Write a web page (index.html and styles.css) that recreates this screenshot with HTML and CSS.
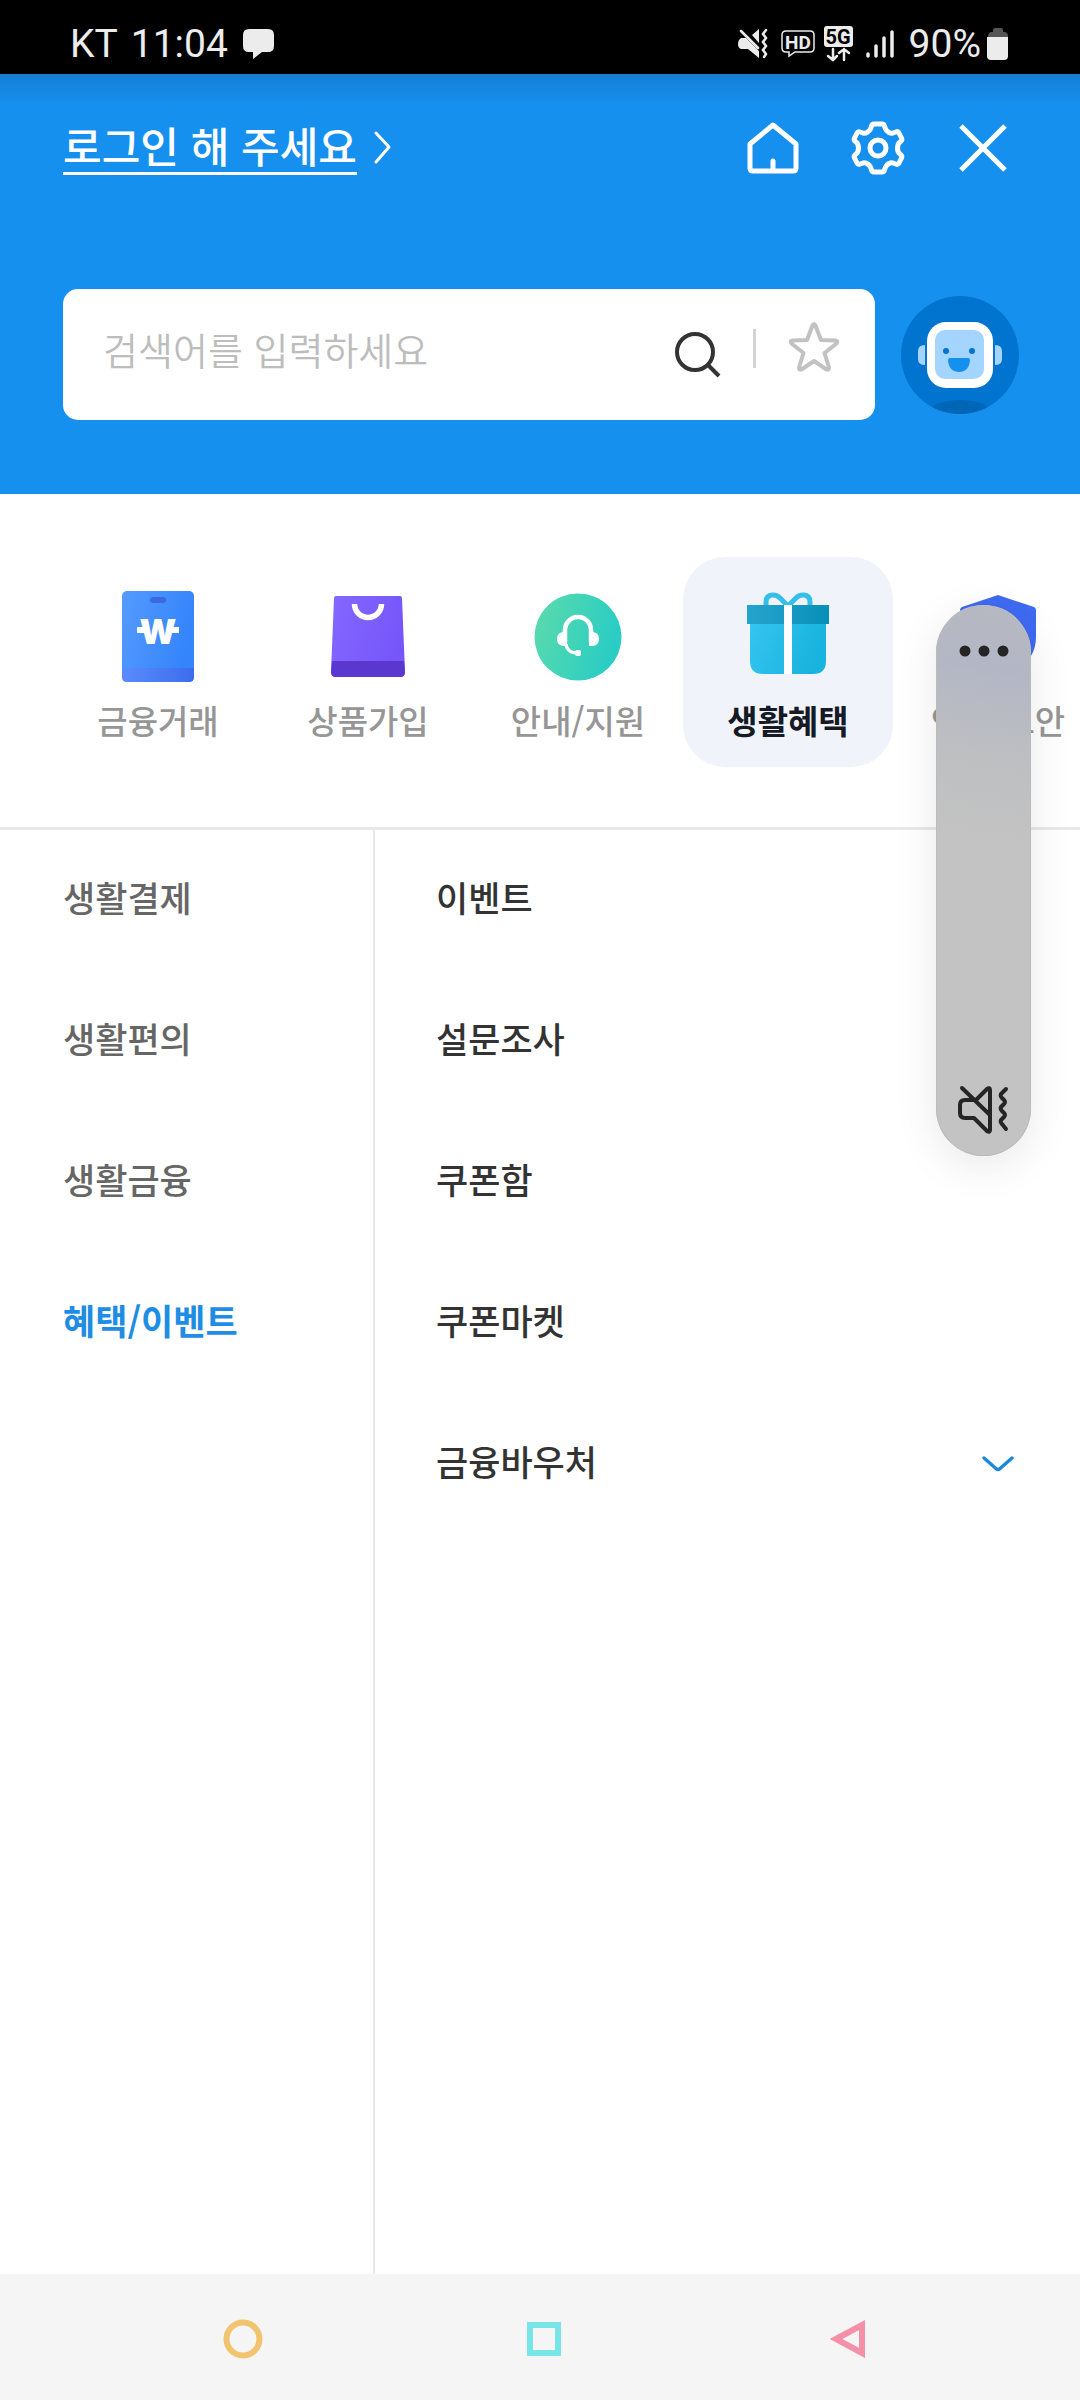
FILE: index.html
```html
<!DOCTYPE html>
<html lang="ko">
<head>
<meta charset="utf-8">
<meta name="viewport" content="width=device-width, initial-scale=1">
<title>전체메뉴</title>
<link rel="stylesheet" href="styles.css">
</head>
<body>
<div class="status">
  <span>KT</span>
  <span>11:04</span>
  <svg class="status-msg" width="32" height="32" viewBox="0 0 32 32" fill="#ececec"><path d="M6 1h19q6 0 6 6v11q0 6-6 6h-6l-9 7v-7H6q-6 0-6-6V7q0-6 6-6z"/></svg>
  <div class="status-right">
    <svg width="32" height="32" viewBox="0 0 32 32" fill="none" stroke="#ececec" stroke-width="2.5" stroke-linecap="round"><path d="M14 7 21 1V15zM3 10h5L21 23v7L10 21H3Q0 20 0 16t3-6z" fill="#ececec" stroke="none"/><path d="M3 3 20 20M28 2l-3 4 3 4-3 4 3 4-3 4 3 4-2 3"/></svg>
    <svg class="status-hd" width="34" height="32" viewBox="0 0 34 32" fill="none" stroke="#ececec" stroke-width="1.5"><path d="M5 3h24q4 0 4 4v13q0 4-4 4H14l-6 4v-4H5q-4 0-4-4V7q0-4 4-4z"/><text class="hd" x="17" y="21" text-anchor="middle">HD</text></svg>
    <svg width="30" height="40" viewBox="0 -2 30 40" fill="none" stroke="#ececec" stroke-width="2.5" stroke-linecap="round"><rect x="1" y="0" width="29" height="21" rx="3" fill="#ececec" stroke="none"/><text class="fiveg" x="15" y="18" text-anchor="middle">5G</text><path d="M10 23v11M5 30l5 4 4-4M21 34V23M16 27l5-4 5 4"/></svg>
    <svg width="30" height="32" viewBox="0 0 30 32" stroke="#ececec" stroke-width="3.5" stroke-linecap="round"><path d="M4 26v2M12 18v10M20 10v18M28 4v24"/></svg>
    <span class="status-level">90%</span>
    <svg class="battery" width="22" height="34" viewBox="0 0 22 34"><path d="M6 3q0-2 2-2h6q2 0 2 2v2h1q4 0 4 5H1q0-5 4-5h1z" fill="#555"/><path d="M0 10h21v19q0 4-4 4H4q-4 0-4-4z" fill="#ececec"/></svg>
  </div>
</div>

<header class="head">
  <div class="head-top">
    <a class="login" href="#"><span class="login-text">로그인 해 주세요</span>
      <svg width="20" height="36" viewBox="0 0 20 36" fill="none" stroke="#fff" stroke-width="3" stroke-linecap="round" stroke-linejoin="round"><path d="M3 4l13 14L3 33"/></svg></a>
    <nav class="head-actions">
      <button type="button" aria-label="홈"><svg width="60" height="60" viewBox="0 0 60 60" fill="none" stroke="#fff" stroke-width="5" stroke-linejoin="round" stroke-linecap="round"><path d="M30 7 53 26V50q0 3-3 3H10q-3 0-3-3V26zM30 43v9"/></svg></button>
      <button type="button" aria-label="설정"><svg width="60" height="60" viewBox="0 0 60 60" fill="none" stroke="#fff" stroke-width="5" stroke-linejoin="round"><circle cx="30" cy="30" r="8"/><path d="M26 6h8q2 0 2.500 2l1 3q1 2 3.500 3.500 2 1 4 .5l3-1q2-1 3 1l2.500 5q1 2-1 3.500-3 2-3 6.500t3 6.500q2 1.500 1 3.500l-2.500 5q-1 2-3 1l-3-1q-2-.5-4 .5-2.500 1.500-3.500 3.500l-1 3q-.5 2-2.500 2h-8q-2 0-2.500-2l-1-3q-1-2-3.500-3.500-2-1-4-.5l-3 1q-2 1-3-1l-2.500-5q-1-2 1-3.500 3-2 3-6.500t-3-6.500q-2-1.500-1-3.500l2.500-5q1-2 3-1l3 1q2 .5 4-.5 2.500-1.500 3.500-3.500l1-3Q24 6 26 6z"/></svg></button>
      <button type="button" aria-label="닫기"><svg width="60" height="60" viewBox="0 0 60 60" fill="none" stroke="#fff" stroke-width="5"><path d="M8 8 52 52M52 8 8 52"/></svg></button>
    </nav>
  </div>
  <div class="head-search">
    <form class="search">
      <input class="search-input" type="text" aria-label="검색어" placeholder="검색어를 입력하세요">
      <button class="search-go" type="button" aria-label="검색"><svg width="48" height="48" viewBox="0 0 48 48" fill="none" stroke="#333" stroke-width="4"><circle cx="21" cy="21" r="18"/><path d="M33 33 45 45"/></svg></button>
      <span class="search-line"></span>
      <button class="search-star" type="button" aria-label="즐겨찾기"><svg width="52" height="52" viewBox="0 0 52 52" fill="none" stroke="#c2c2c2" stroke-width="4" stroke-linejoin="round"><path d="M24.500 4.500q1.500-3 3 0L33 19l14.500.5q3 .5 1 3L36.500 32l4.500 14.500q0 3-2.500 2L26 40 13.500 48.500q-2.500 1-2.500-2L15.500 32 3.500 22.500q-2-2.500 1-3L19 19z"/></svg></button>
    </form>
    <button class="bot" type="button" aria-label="챗봇"><svg width="118" height="118" viewBox="0 0 118 118"><clipPath id="bot-round"><circle cx="59" cy="59" r="59"/></clipPath><circle cx="59" cy="59" r="59" fill="#0074cf"/><ellipse cx="59" cy="113" rx="28" ry="9" fill="#0067b8" clip-path="url(#bot-round)"/><path d="M24 49v20q-7 0-7-6v-8q0-6 7-6zM94 49v20q7 0 7-6v-8q0-6-7-6z" fill="#a3d5ff"/><rect x="26" y="26" width="66" height="66" rx="19" fill="#fff"/><rect x="34" y="34" width="49" height="49" rx="10" fill="#a3d5ff"/><circle cx="45" cy="55" r="3" fill="#0074cf"/><circle cx="71" cy="55" r="3" fill="#0074cf"/><path d="M49 62h18q2 0 2 2-1 12-11 12T47 64q0-2 2-2z" fill="#1690ee"/></svg></button>
  </div>
</header>

<nav class="tabs">
  <a class="tab" href="#"><svg width="100" height="100" viewBox="0 0 100 100"><defs><linearGradient id="g1" x2="1" y2=".3"><stop stop-color="#559bff"/><stop offset="1" stop-color="#3484fb"/></linearGradient><linearGradient id="g1b"><stop stop-color="#5c8bff"/><stop offset="1" stop-color="#3c6dea"/></linearGradient></defs><rect x="14" y="4" width="72" height="91" rx="5" fill="url(#g1)"/><path d="M14 81h72v9q0 5-5 5H19q-5 0-5-5z" fill="url(#g1b)"/><rect x="42" y="10" width="16" height="6" rx="3" fill="#3a6ae0"/><text class="won" x="50" y="57" text-anchor="middle">W</text><path d="M29 40h8v6h-8zM64 40h7v6h-7z" fill="#fff"/></svg><span>금융거래</span></a>
  <a class="tab" href="#"><svg width="100" height="100" viewBox="0 0 100 100"><defs><linearGradient id="g2" x2="1" y2=".3"><stop stop-color="#8468ff"/><stop offset="1" stop-color="#7656fa"/></linearGradient></defs><path d="M18 9h64q2 0 2 2l3 74q0 5-5 5H18q-5 0-5-5l3-74q0-2 2-2z" fill="url(#g2)"/><path d="M14 74h72l1 11q0 5-5 5H18q-5 0-5-5z" fill="#5a38d0"/><path d="M36.500 17a13.500 13.500 0 0 0 27 0" fill="none" stroke="#fff" stroke-width="5.500"/></svg><span>상품가입</span></a>
  <a class="tab" href="#"><svg width="100" height="100" viewBox="0 0 100 100"><defs><linearGradient id="g3" x2="1" y2=".3"><stop stop-color="#5ddbab"/><stop offset="1" stop-color="#2acdc4"/></linearGradient></defs><circle cx="50" cy="50" r="43.500" fill="url(#g3)"/><g fill="none" stroke="#fff"><path d="M37 56V43a13 13 0 0 1 26 0v13" stroke-width="4.500"/><path d="M38 57q1 9 12 9" stroke-width="3"/></g><path d="M39 45v14h-3q-7 0-7-7t7-7zM61 45v14h3q7 0 7-7t-7-7z" fill="#fff"/><rect x="47" y="63" width="6" height="6" rx="2" fill="#fff"/></svg><span>안내/지원</span></a>
  <a class="tab tab-on" href="#"><svg width="100" height="100" viewBox="0 0 100 100"><defs><linearGradient id="g4" x2="1" y2=".3"><stop stop-color="#35c5f0"/><stop offset="1" stop-color="#18b3de"/></linearGradient><linearGradient id="g4b"><stop stop-color="#25a5cd"/><stop offset="1" stop-color="#088fb8"/></linearGradient></defs><path d="M12 36h76v38q0 13-13 13H25q-13 0-13-13z" fill="url(#g4)"/><path d="M28 18V15q0-7 7-7 4 0 7 3l8 8 8-8q3-3 7-3 7 0 7 7v3" fill="none" stroke="#35bfea" stroke-width="5"/><path d="M9 18h82v19H9z" fill="url(#g4b)"/><path d="M46 18h8v69h-8z" fill="#fff"/></svg><span>생활혜택</span></a>
  <a class="tab" href="#"><svg width="100" height="100" viewBox="0 0 100 100"><path d="M50 8 86 20q2 1 2 3v27q0 29-38 42Q12 79 12 50V23q0-2 2-3z" fill="#3f6bf2"/></svg><span>인증/보안</span></a>
</nav>

<main class="content">
  <ul class="groups">
    <li><a href="#">생활결제</a></li>
    <li><a href="#">생활편의</a></li>
    <li><a href="#">생활금융</a></li>
    <li><a class="group-on" href="#">혜택/이벤트</a></li>
  </ul>
  <ul class="items">
    <li><a href="#">이벤트</a></li>
    <li><a href="#">설문조사</a></li>
    <li><a href="#">쿠폰함</a></li>
    <li><a href="#">쿠폰마켓</a></li>
    <li><a href="#">금융바우처<svg class="chevron" width="36" height="20" viewBox="0 0 36 20" fill="none" stroke="#1e88da" stroke-width="3.500" stroke-linecap="round" stroke-linejoin="round"><path d="M4 4l12.500 11q1.500 1 3 0L32 4"/></svg></a></li>
  </ul>
</main>

<nav class="sysnav">
  <button type="button" aria-label="홈 화면"><svg width="42" height="42" viewBox="0 0 42 42" fill="none" stroke="#f2c46f" stroke-width="6"><circle cx="21" cy="21" r="16.500"/></svg></button>
  <button type="button" aria-label="최근 앱"><svg width="42" height="42" viewBox="0 0 42 42" fill="none" stroke="#78e5e8" stroke-width="6"><path d="M6 7h28v28H6z"/></svg></button>
  <button type="button" aria-label="뒤로"><svg width="42" height="42" viewBox="0 0 42 42" fill="none" stroke="#f590a8" stroke-width="6"><path d="M10 21 36 7v28z"/></svg></button>
</nav>

<aside class="volume">
  <button type="button" aria-label="더보기"><svg width="50" height="12" viewBox="0 0 50 12" fill="#252525"><circle cx="6" cy="6" r="5.500"/><circle cx="25" cy="6" r="5.500"/><circle cx="44" cy="6" r="5.500"/></svg></button>
  <button type="button" aria-label="진동"><svg width="54" height="52" viewBox="0 0 54 52" fill="none" stroke="#252525" stroke-width="4" stroke-linecap="round" stroke-linejoin="round"><path d="M5 4 33 31M19 16 30 5q3-2 3 1v40q0 3-3 1L17 34H8q-5 0-5-5v-8q0-5 5-5h10M49 5l-5 5q-1 2 1 4l2 2q2 2 0 4l-3 3q-1 2 1 4l2 2q2 2 0 4l-3 3q-1 2 1 4l4 5"/></svg></button>
</aside>
</body>
</html>
```
FILE: styles.css
```css
* {
  box-sizing: border-box;
}

body {
  margin: 0;
  min-height: 100vh;
  display: flex;
  flex-direction: column;
  position: relative;
  overflow-x: hidden;
  background: #fff;
  font-family: "Noto Sans CJK KR", sans-serif;
  font-weight: 500;
}

a {
  color: inherit;
  text-decoration: none;
}

button {
  padding: 0;
  border: 0;
  background: none;
  display: flex;
  align-items: center;
  justify-content: center;
}

svg {
  display: block;
  flex: none;
  overflow: visible;
}

ul {
  margin: 0;
  padding: 0;
  list-style: none;
}

/* Status bar */
.status {
  height: 74px;
  padding: 14px 71px 0 70px;
  display: flex;
  align-items: center;
  gap: 13px;
  background: #000;
  color: #ececec;
  font: 400 39px/48px Roboto, sans-serif;
}

.status-msg {
  margin-left: 2px;
}

.status-right {
  margin-left: auto;
  display: flex;
  align-items: center;
  gap: 11px;
}

.status-hd {
  margin-right: -3px;
}

.status-level {
  margin-left: 4px;
}

.battery {
  margin-left: -5px;
}

.hd {
  font: 700 19px Roboto, sans-serif;
  fill: #ececec;
  stroke: none;
}

.fiveg {
  font: 700 20px Roboto, sans-serif;
  fill: #000;
  stroke: none;
}

/* Blue header */
.head {
  padding: 42px 61px 74px 63px;
  background: linear-gradient(#147fd6, #1690ee 32px);
}

.head-top {
  display: flex;
  align-items: center;
  justify-content: space-between;
  height: 64px;
  padding-right: 4px;
}

.login {
  display: flex;
  align-items: center;
  gap: 16px;
  padding-bottom: 3px;
  color: #fff;
  font-size: 42px;
  line-height: 54px;
}

.login-text {
  border-bottom: 3px solid #fff;
}

.head-actions {
  display: flex;
  gap: 41px;
}

.head-actions button {
  width: 64px;
  height: 64px;
}

.head-search {
  margin-top: 109px;
  display: flex;
  align-items: center;
  gap: 26px;
}

.search {
  flex: 1;
  height: 131px;
  padding: 0 35px 0 40px;
  display: flex;
  align-items: center;
  border-radius: 15px;
  background: #fff;
}

.search-input {
  flex: 1;
  min-width: 0;
  height: 80px;
  padding: 0 0 12px;
  border: 0;
  outline: 0;
  font: 350 38px/56px "Noto Sans CJK KR", sans-serif;
}

.search-input::placeholder {
  color: #bdbdbd;
  opacity: 1;
}

.search-line {
  width: 3px;
  height: 39px;
  margin: 0 32px 12px 31px;
  background: #d4d4d4;
}

.search-star {
  padding-bottom: 16px;
}

/* Category tabs */
.tabs {
  display: flex;
  padding: 63px 0 60px 53px;
  overflow: hidden;
  border-bottom: 3px solid #e8e8e8;
}

.tab {
  flex: 0 0 210px;
  height: 210px;
  padding-top: 30px;
  display: flex;
  flex-direction: column;
  align-items: center;
  gap: 9px;
  border-radius: 42px;
  color: #969696;
  font-size: 33px;
  line-height: 48px;
}

.tab-on {
  background: #f0f4fa;
  color: #151a24;
  font-weight: 700;
}

.won {
  font: 900 34px Inter, sans-serif;
  fill: #fff;
}

/* Menu lists */
.content {
  flex: 1;
  display: flex;
  font-size: 35px;
  line-height: 134px;
}

.groups {
  width: 375px;
  padding-left: 63px;
  border-right: 2px solid #e9e9e9;
  color: #666;
}

.group-on {
  color: #1e8de3;
  font-weight: 700;
}

.items {
  flex: 1;
  padding: 0 64px 0 61px;
  color: #333;
}

.groups li,
.items li {
  height: 141px;
}

.items a {
  display: flex;
  align-items: center;
  justify-content: space-between;
}

.chevron {
  margin-top: 6px;
}

/* System navigation */
.sysnav {
  height: 126px;
  padding: 4px 82px 0 92px;
  display: grid;
  grid-template-columns: repeat(3, 1fr);
  background: #f5f5f5;
}

/* Floating volume panel */
.volume {
  position: absolute;
  top: 605px;
  right: 49px;
  width: 95px;
  height: 551px;
  padding: 40px 0 20px;
  display: flex;
  flex-direction: column;
  align-items: center;
  justify-content: space-between;
  border-radius: 48px;
  background: linear-gradient(190deg, #b6b9c1, #b3b7c5 70px, #bebfc1 160px, #c3c3c3 240px);
  box-shadow: 0 10px 44px rgba(0, 0, 0, .09), inset 0 0 0 1px #bbb;
}
```
